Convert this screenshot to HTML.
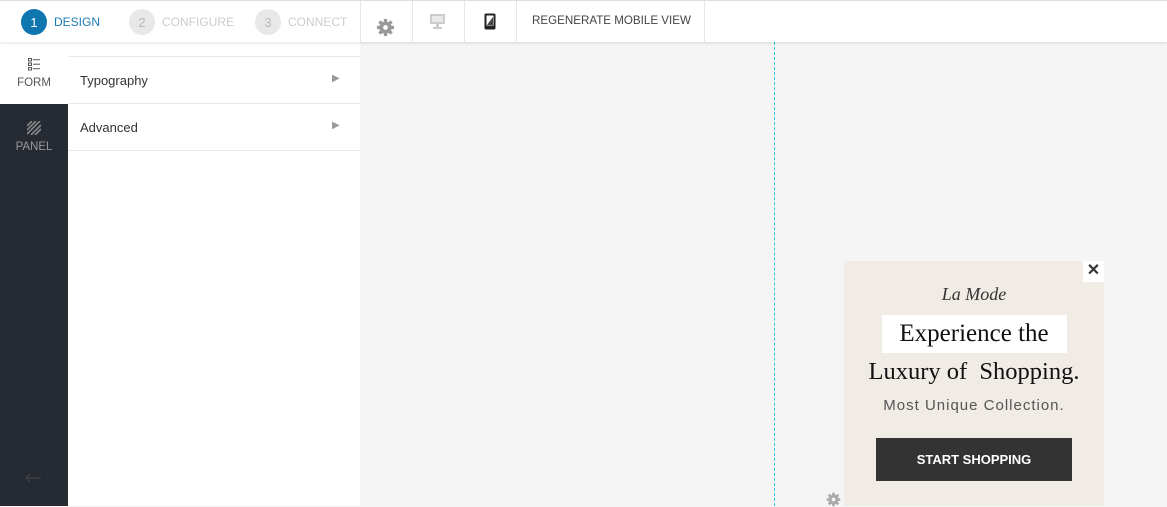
<!DOCTYPE html>
<html><head><style>
*{margin:0;padding:0;box-sizing:border-box}
body{width:1167px;height:506px;overflow:hidden;background:#f5f5f5;font-family:"Liberation Sans",sans-serif;position:relative}
.abs{position:absolute}
.top{left:0;top:0;width:1167px;height:42px;background:#fff;border-top:1px solid #ddd;box-shadow:0 1px 3px rgba(0,0,0,.12);z-index:2}
.step{top:8px;height:26px;display:flex;align-items:center;font-size:12px;color:#ccc}
.circ{width:26px;height:26px;border-radius:50%;background:#e8e8e8;color:#bbb;display:flex;align-items:center;justify-content:center;font-size:13px;margin-right:7px}
.sep{top:0;width:1px;height:42px;background:#e6e6e6}
</style></head><body>
<div class="abs top">
 <div class="abs step" style="left:21px;color:#1a7ab5"><div class="circ" style="background:#0f76b0;color:#fff">1</div>DESIGN</div>
 <div class="abs step" style="left:129px"><div class="circ">2</div>CONFIGURE</div>
 <div class="abs step" style="left:255px"><div class="circ">3</div>CONNECT</div>
 <div class="abs sep" style="left:360px"></div>
 <div class="abs sep" style="left:412px"></div>
 <div class="abs sep" style="left:464px"></div>
 <div class="abs sep" style="left:516px"></div>
 <div class="abs sep" style="left:704px"></div>
 <svg class="abs" style="left:376px;top:17px" width="19" height="19" viewBox="0 0 20 20"><g fill="#999"><circle cx="10" cy="10" r="6.5"/><g stroke="#999" stroke-width="3.5"><line x1="10" y1="1" x2="10" y2="19"/><line x1="1" y1="10" x2="19" y2="10"/><line x1="3.6" y1="3.6" x2="16.4" y2="16.4"/><line x1="16.4" y1="3.6" x2="3.6" y2="16.4"/></g></g><circle cx="10" cy="10" r="2.5" fill="#fff"/></svg>
 <svg class="abs" style="left:429px;top:12px" width="17" height="16" viewBox="0 0 17 16"><rect x="1" y="1" width="15" height="10" fill="#ccc"/><rect x="3" y="3" width="11" height="6" fill="#e8e8e8"/><rect x="7" y="11" width="3" height="3" fill="#ccc"/><rect x="4" y="14" width="9" height="2" fill="#ccc"/></svg>
 <svg class="abs" style="left:484px;top:12px" width="12" height="17" viewBox="0 0 12 17"><rect x="0.5" y="0.5" width="11" height="16" rx="1.5" fill="#222"/><rect x="2.5" y="2.5" width="7" height="10" fill="#fff"/><path d="M3 12 L9 4 L9 12Z" fill="#444"/></svg>
 <div class="abs" style="left:532px;top:13px;font-size:11.6px;color:#444">REGENERATE MOBILE VIEW</div>
</div>
<div class="abs" style="left:0;top:41px;width:68px;height:63px;background:#fff"></div>
<svg class="abs" style="left:27px;top:57px" width="14" height="14" viewBox="0 0 14 14"><g fill="none" stroke="#555" stroke-width="1"><rect x="1.5" y="1.5" width="3" height="2.5"/><rect x="1.5" y="6" width="3" height="2.5"/><rect x="1.5" y="10.5" width="3" height="2.5"/><line x1="6" y1="2.7" x2="13" y2="2.7"/><line x1="6" y1="7.2" x2="13" y2="7.2"/><line x1="6" y1="11.7" x2="13" y2="11.7"/></g></svg>
<div class="abs" style="left:0;top:77px;width:68px;text-align:center;font-size:11.5px;color:#555">FORM</div>
<div class="abs" style="left:0;top:104px;width:68px;height:402px;background:#262b33"></div>
<svg class="abs" style="left:27px;top:121px" width="14" height="14" viewBox="0 0 14 14"><g stroke="#888" stroke-width="1.6"><line x1="0" y1="5" x2="5" y2="0"/><line x1="0" y1="9" x2="9" y2="0"/><line x1="0" y1="13" x2="13" y2="0"/><line x1="4" y1="14" x2="14" y2="4"/><line x1="8" y1="14" x2="14" y2="8"/></g></svg>
<div class="abs" style="left:0;top:141px;width:68px;text-align:center;font-size:11.5px;color:#999">PANEL</div>
<svg class="abs" style="left:24px;top:472px" width="18" height="12" viewBox="0 0 18 12"><g stroke="#444" stroke-width="1" fill="none"><line x1="2" y1="6" x2="17" y2="6"/><path d="M6 2 L2 6 L6 10"/></g></svg>
<div class="abs" style="left:68px;top:41px;width:292px;height:465px;background:#fff"></div>
<div class="abs" style="left:68px;top:56px;width:292px;height:1px;background:#e8e8e8"></div>
<div class="abs" style="left:68px;top:103px;width:292px;height:1px;background:#e8e8e8"></div>
<div class="abs" style="left:68px;top:150px;width:292px;height:1px;background:#e8e8e8"></div>
<div class="abs" style="left:80px;top:73px;font-size:13px;color:#333">Typography</div>
<div class="abs" style="left:80px;top:120px;font-size:13px;color:#333">Advanced</div>
<div class="abs" style="left:332px;top:73px;font-size:10px;color:#999">▶</div>
<div class="abs" style="left:332px;top:120px;font-size:10px;color:#999">▶</div>
<div class="abs" style="left:774px;top:42px;height:464px;border-left:1px dashed #2bc3e6"></div>
<div class="abs" style="left:844px;top:261px;width:260px;height:245px;background:#f1ebe6"></div>
<div class="abs" style="left:1083px;top:261px;width:21px;height:21px;background:#fff;text-align:center;font-size:16px;font-weight:bold;line-height:20px;color:#333">✕</div>
<div class="abs" style="left:844px;top:284px;width:260px;text-align:center;font-family:'Liberation Serif',serif;font-style:italic;font-size:18px;color:#333">La Mode</div>
<div class="abs" style="left:882px;top:315px;width:185px;height:38px;background:#fff"></div>
<div class="abs" style="left:844px;top:320px;width:260px;text-align:center;font-family:'Liberation Serif',serif;font-size:25px;color:#111">Experience the</div>
<div class="abs" style="left:844px;top:358px;width:260px;text-align:center;font-family:'Liberation Serif',serif;font-size:24.5px;color:#111">Luxury of&nbsp; Shopping.</div>
<div class="abs" style="left:844px;top:397px;width:260px;text-align:center;font-size:15px;letter-spacing:1px;color:#555">Most Unique Collection.</div>
<div class="abs" style="left:876px;top:438px;width:196px;height:43px;background:#333;color:#fff;font-size:13px;font-weight:bold;text-align:center;line-height:43px">START SHOPPING</div>
<svg class="abs" style="left:826px;top:492px" width="15" height="15" viewBox="0 0 20 20"><g fill="#aaa"><circle cx="10" cy="10" r="6.5"/><g stroke="#aaa" stroke-width="3.5"><line x1="10" y1="1" x2="10" y2="19"/><line x1="1" y1="10" x2="19" y2="10"/><line x1="3.6" y1="3.6" x2="16.4" y2="16.4"/><line x1="16.4" y1="3.6" x2="3.6" y2="16.4"/></g></g><circle cx="10" cy="10" r="2.5" fill="#f5f5f5"/></svg>
</body></html>
